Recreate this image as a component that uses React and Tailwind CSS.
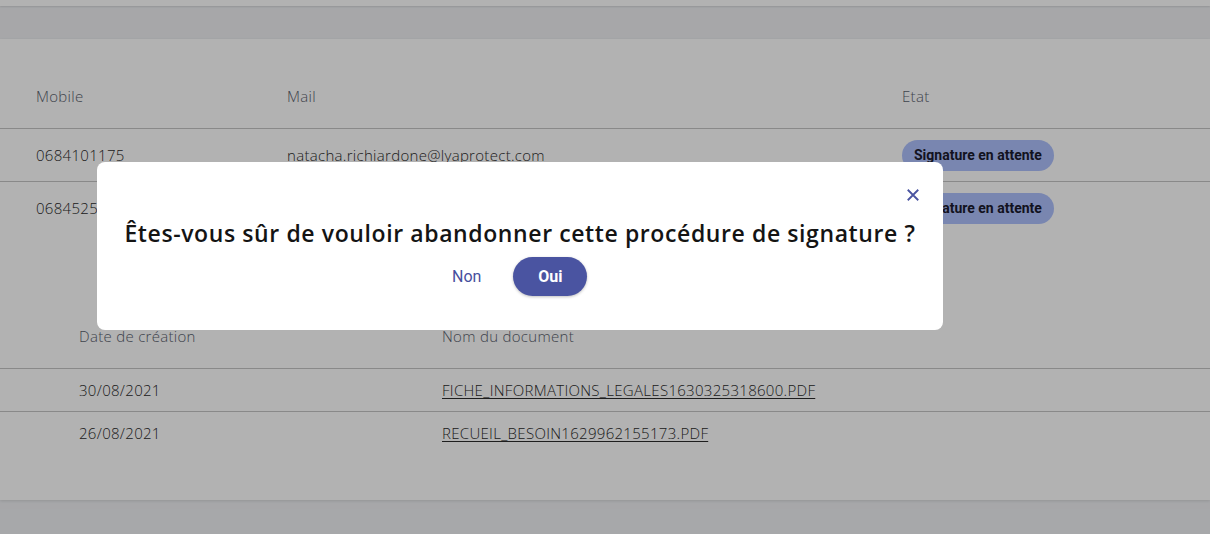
import React from 'react';

const signataires = [
  { mobile: '0684101175', mail: 'natacha.richiardone@lyaprotect.com', etat: 'Signature en attente' },
  { mobile: '0684525898', mail: 'jean.dupont@lyaprotect.com', etat: 'Signature en attente' },
];

const documents = [
  { date: '30/08/2021', nom: 'FICHE_INFORMATIONS_LEGALES1630325318600.PDF' },
  { date: '26/08/2021', nom: 'RECUEIL_BESOIN1629962155173.PDF' },
];

function Badge({ children }) {
  return (
    <span className="inline-flex items-center h-[31px] px-3 rounded-full bg-[#aec1fd] text-[14px] font-bold tracking-normal text-[#1a1a2e] font-['Roboto',sans-serif]">
      {children}
    </span>
  );
}

export default function App() {
  return (
    <div className="relative w-[1210px] h-[534px] overflow-hidden bg-[#eff0f3] font-['Open_Sans',sans-serif] font-light">
      {/* bottom of the card above */}
      <div className="h-[6px] bg-white shadow-[0_1px_2px_rgba(0,0,0,0.12)]" />

      <div className="mt-[33px] h-[461px] bg-white shadow-[0_1px_3px_rgba(0,0,0,0.12)] tracking-[0.3px]">
        {/* signataires */}
        <div className="pt-[46px]">
          <div className="flex items-center h-[22px] mb-[21px] text-[15px] text-[#5a616e]">
            <div className="w-[251px] ml-[36px]">Mobile</div>
            <div className="w-[615px]">Mail</div>
            <div>Etat</div>
          </div>
          {signataires.map((s) => (
            <div key={s.mobile} className="flex items-center h-[53px] border-t border-[#c4c4c4] text-[15px] text-[#2b2b2b]">
              <div className="w-[251px] ml-[36px]">{s.mobile}</div>
              <div className="w-[615px]">{s.mail}</div>
              <div><Badge>{s.etat}</Badge></div>
            </div>
          ))}
        </div>

        {/* documents */}
        <div className="pt-[91px]">
          <div className="flex items-center h-[22px] mb-[21px] text-[15px] text-[#5a616e]">
            <div className="w-[363px] ml-[79px]">Date de création</div>
            <div>Nom du document</div>
          </div>
          {documents.map((d) => (
            <div key={d.nom} className="flex items-center h-[43px] border-t border-[#c4c4c4] text-[15px] text-[#2b2b2b]">
              <div className="w-[363px] ml-[79px]">{d.date}</div>
              <a className="underline underline-offset-2">{d.nom}</a>
            </div>
          ))}
        </div>
      </div>

      {/* overlay */}
      <div className="absolute inset-0 bg-black/30" />

      {/* modal */}
      <div className="absolute left-[97px] top-[162px] w-[846px] h-[168px] bg-white rounded-lg">
        <div className="flex justify-end pt-[24px] pr-[21px]">
          <button className="text-[#4a54a1]">
            <svg width="18" height="18" viewBox="0 0 24 24" fill="none" stroke="currentColor" strokeWidth="2.4">
              <path d="M5 5l14 14M19 5L5 19" />
            </svg>
          </button>
        </div>
        <h2 className="mt-[14px] h-[30px] leading-[30px] text-center text-[23px] font-semibold tracking-[0.6px] text-[#141414]">
          Êtes-vous sûr de vouloir abandonner cette procédure de signature ?
        </h2>
        <div className="mt-[9px] flex items-center pl-[355px] gap-[32px] font-['Roboto',sans-serif]">
          <button className="text-[16px] font-normal text-[#474f9e]">Non</button>
          <button className="w-[74px] h-[39px] rounded-full bg-[#4a54a1] text-white text-[16px] font-bold shadow-[0_1px_3px_rgba(0,0,0,0.25)]">Oui</button>
        </div>
      </div>
    </div>
  );
}
